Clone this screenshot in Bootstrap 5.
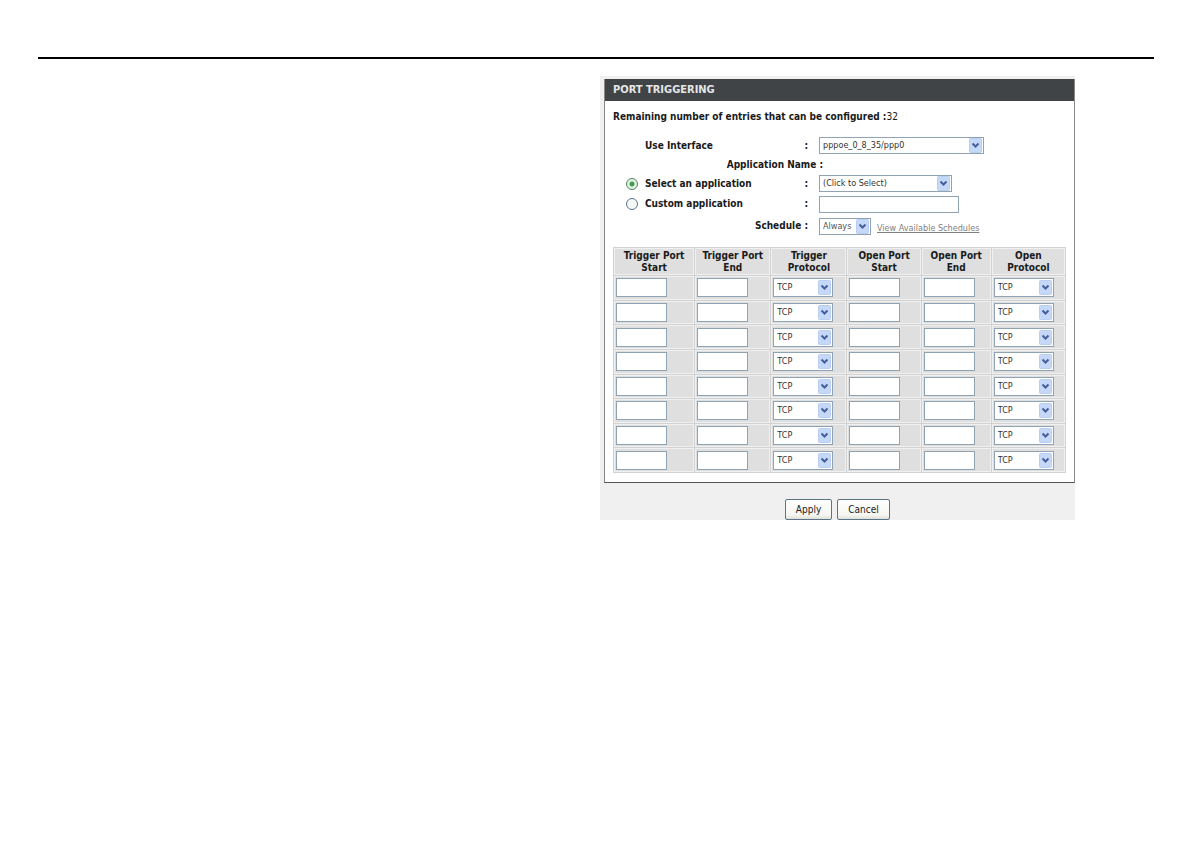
<!DOCTYPE html>
<html lang="en">
<head>
<meta charset="utf-8">
<meta name="viewport" content="width=device-width, initial-scale=1">
<title>Port Triggering</title>
<link href="https://cdn.jsdelivr.net/npm/bootstrap@5.3.0/dist/css/bootstrap.min.css" rel="stylesheet">
<style>
  body { font-family: "DejaVu Sans Condensed", "DejaVu Sans", sans-serif; font-size: 10px; line-height: 12px; color: #1a1a1a; background: #fff; }
  .page { padding: 57px 36px 24px 38px; }
  .rule { border-top: 2px solid #000; }
  .panel { max-width: 475px; margin-top: 17px; padding: 3px 0 0 4px; background: #f0f0f0; }
  .panel-box { background: #fff; border: 1px solid #555; border-left-color: #888; border-right-color: #888; border-top: 0; padding-bottom: 9px; }
  .panel-title { margin: 0; padding: 0 8px; font-size: 11px; line-height: 22px; font-weight: bold; color: #e6e6e6; background: #404446; }
  .panel-content { padding: 0 8px; }
  .remaining { margin: 0; padding: 10px 0 13px; line-height: 12px; }
  .line-a { min-height: 19px; }
  .line-b { min-height: 22px; }
  .label-cell { width: 206px; padding-left: 32px; padding-right: 11px; font-weight: bold; flex: none; }
  .label-cell.with-radio { padding-left: 13px; }
  .label-cell.wide { width: 210px; padding-right: 0; }
  .with-radio label { margin-left: 7px; }

  input[type=radio] { appearance: none; width: 12px; height: 12px; margin: 0; border: 1px solid #55768f; border-radius: 50%; background: #f6f8f6; }
  input[type=radio]:checked { border-color: #4d8560; background: radial-gradient(circle, #3fa04a 0 2px, #e6f3e6 3px); }
  .field, .pick { height: 17px; border: 1px solid #8fa3b3; border-radius: 0; background-color: #fff; color: #333; font-size: 9px; line-height: 13px; padding: 0 3px; }
  .pick {
    appearance: none; padding-right: 16px;
    background-image: url("data:image/svg+xml,%3Csvg xmlns='http://www.w3.org/2000/svg' width='14' height='15' viewBox='0 0 14 15'%3E%3Crect x='.5' y='.5' width='12' height='14' rx='1' fill='%23c6d8f8' stroke='%23b8cef2'/%3E%3Cpath d='M3.5 5.5l3 3 3-3' fill='none' stroke='%23455f9c' stroke-width='2'/%3E%3C/svg%3E");
    background-repeat: no-repeat; background-position: right center;
  }
  .w-iface { width: 165px; }
  .w-app { width: 133px; }
  .w-custom { width: 140px; }
  .w-sched { width: 52px; color: #555; }
  .sched-link { font-size: 9px; color: #808080; margin-left: 6px; padding-top: 3px; }

  .ports { width: 100%; height: 226px; margin-top: 10px; table-layout: fixed; border-collapse: collapse; }
  .ports th, .ports td { background: #dfdfdf; border: 1px solid #d2d2d2; box-shadow: inset 0 0 0 1px #f0f0f0; }
  .ports th { height: 28px; padding: 0 2px; text-align: center; vertical-align: middle; line-height: 12px; }
  .ports td { padding: 0 0 0 2px; vertical-align: middle; }
  .ports input, .ports select { display: block; height: 19px; }
  .ports .field { width: 51px; }
  .ports .pick { width: 60px; }
  .col-a { width: 81px; }
  .col-b { width: 76px; }
  .col-c { width: 74px; }
  .col-d { width: 70px; }

  .actions { padding: 16px 4px 0 0; gap: 5px; }
  .xp-btn { height: 21px; padding: 0; border: 1px solid #5a7488; border-radius: 2px; background: linear-gradient(#fff, #f5f5f1 80%, #dfdfd8); color: #222; line-height: 17px; }
  .w-apply { width: 47px; }
  .w-cancel { width: 53px; }
</style>
</head>
<body>
<div class="page">
  <div class="rule"></div>
  <div class="row g-0">
    <main class="col-6 offset-6 ps-1">
      <form class="panel" onsubmit="return false">
        <div class="panel-box">
          <h1 class="panel-title">PORT TRIGGERING</h1>
          <div class="panel-content">
            <p class="remaining"><b>Remaining number of entries that can be configured :</b>32</p>

            <div class="d-flex align-items-center line-a">
              <div class="label-cell d-flex justify-content-between"><label for="iface">Use Interface</label><span>:</span></div>
              <select id="iface" class="pick w-iface"><option>pppoe_0_8_35/ppp0</option></select>
            </div>
            <div class="d-flex align-items-center line-a">
              <div class="label-cell wide text-end">Application Name :</div>
            </div>
            <div class="d-flex align-items-center line-a">
              <div class="label-cell with-radio d-flex align-items-center">
                <input type="radio" name="app" id="appSelect" checked><label for="appSelect">Select an application</label><span class="ms-auto">:</span>
              </div>
              <select class="pick w-app" aria-label="Application"><option>(Click to Select)</option></select>
            </div>
            <div class="d-flex align-items-center line-b">
              <div class="label-cell with-radio d-flex align-items-center">
                <input type="radio" name="app" id="appCustom"><label for="appCustom">Custom application</label><span class="ms-auto">:</span>
              </div>
              <input type="text" class="field w-custom" aria-label="Custom application name">
            </div>
            <div class="d-flex align-items-center line-b">
              <div class="label-cell text-end"><label for="sched">Schedule :</label></div>
              <select id="sched" class="pick w-sched"><option>Always</option></select>
              <a href="#" class="sched-link">View Available Schedules</a>
            </div>

            <table class="ports">
              <colgroup><col class="col-a"><col class="col-b"><col class="col-b"><col class="col-c"><col class="col-d"><col class="col-c"></colgroup>
              <thead>
                <tr><th>Trigger Port<br>Start</th><th>Trigger Port<br>End</th><th>Trigger<br>Protocol</th><th>Open Port<br>Start</th><th>Open Port<br>End</th><th>Open<br>Protocol</th></tr>
              </thead>
              <tbody id="portRows"></tbody>
            </table>
          </div>
        </div>
        <div class="actions d-flex justify-content-center">
          <button type="submit" class="xp-btn w-apply">Apply</button>
          <button type="button" class="xp-btn w-cancel">Cancel</button>
        </div>
      </form>
    </main>
  </div>
</div>
<script>
  const field = name => `<td><input type="text" class="field" aria-label="${name}"></td>`;
  const protocol = name => `<td><select class="pick" aria-label="${name}"><option>TCP</option><option>UDP</option></select></td>`;
  let rows = '';
  for (let n = 1; n <= 8; n++) {
    rows += '<tr>' + field('Trigger port start ' + n) + field('Trigger port end ' + n) + protocol('Trigger protocol ' + n)
      + field('Open port start ' + n) + field('Open port end ' + n) + protocol('Open protocol ' + n) + '</tr>';
  }
  document.getElementById('portRows').innerHTML = rows;
</script>
<script src="https://cdn.jsdelivr.net/npm/bootstrap@5.3.0/dist/js/bootstrap.bundle.min.js"></script>
</body>
</html>
